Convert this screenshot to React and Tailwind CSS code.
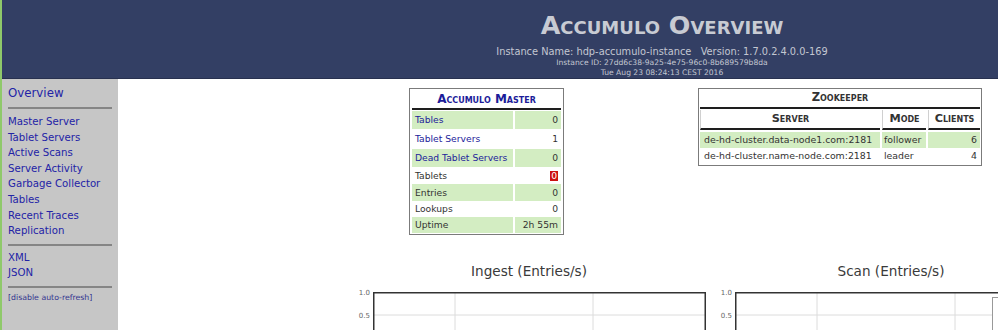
import React from 'react';

const font = "font-['DejaVu_Sans',Verdana,sans-serif]";

const navLinks = [
  'Master Server',
  'Tablet Servers',
  'Active Scans',
  'Server Activity',
  'Garbage Collector',
  'Tables',
  'Recent Traces',
  'Replication',
];

const masterRows = [
  { label: 'Tables', value: '0', link: true, green: true, h: 'h-[18px]' },
  { label: 'Tablet Servers', value: '1', link: true, green: false, h: 'h-[20px]' },
  { label: 'Dead Tablet Servers', value: '0', link: true, green: true, h: 'h-[18px]' },
  { label: 'Tablets', value: '0', link: false, green: false, h: 'h-[17px]', alert: true },
  { label: 'Entries', value: '0', link: false, green: true, h: 'h-[17px]' },
  { label: 'Lookups', value: '0', link: false, green: false, h: 'h-[16px]' },
  { label: 'Uptime', value: '2h 55m', link: false, green: true, h: 'h-[16px]' },
];

const zkRows = [
  { server: 'de-hd-cluster.data-node1.com:2181', mode: 'follower', clients: '6', green: true },
  { server: 'de-hd-cluster.name-node.com:2181', mode: 'leader', clients: '4', green: false },
];

function Chart({ title, legend }) {
  return (
    <div className="w-[354px] flex flex-col">
      <div className="h-[26px] text-center text-[13.6px] text-[#3a3a3a] leading-[26px]">{title}</div>
      <div className="flex mt-[8px]">
        <div className="w-[21px] relative text-[7px] text-[#666]">
          <span className="absolute right-[3px] top-[-4px]">1.0</span>
          <span className="absolute right-[3px] top-[19px]">0.5</span>
        </div>
        <svg width="333" height="60" className="block overflow-visible">
          <line x1="82" y1="0" x2="82" y2="60" stroke="#dcdcdc" strokeWidth="1" />
          <line x1="220" y1="0" x2="220" y2="60" stroke="#dcdcdc" strokeWidth="1" />
          <line x1="0" y1="23" x2="333" y2="23" stroke="#dcdcdc" strokeWidth="1" />
          <line x1="0.75" y1="0" x2="0.75" y2="60" stroke="#333" strokeWidth="1.5" />
          <line x1="0" y1="0.75" x2="333" y2="0.75" stroke="#333" strokeWidth="1.5" />
          {!legend && <line x1="332.25" y1="0" x2="332.25" y2="60" stroke="#333" strokeWidth="1.5" />}
          {legend && <rect x="257.5" y="5.5" width="60" height="40" fill="#fff" stroke="#999" strokeWidth="1" />}
        </svg>
      </div>
    </div>
  );
}

export default function App() {
  return (
    <div className={`${font} w-[998px] h-[330px] overflow-hidden border-l-2 border-[#8fc96a] bg-white flex flex-col`}>
      {/* Header */}
      <div className="h-[79px] shrink-0 bg-[#333f64] border-b border-[#28314f] pl-[324px] flex flex-col items-center text-[#c3c7d2]">
        <div className="mt-[12px] text-[25.4px] leading-[26px] font-bold [font-variant:small-caps] text-[#c8cbd3]">
          Accumulo Overview
        </div>
        <div className="mt-[8px] text-[9.8px] leading-[12px] whitespace-pre">
          {'Instance Name: hdp-accumulo-instance   Version: 1.7.0.2.4.0.0-169'}
        </div>
        <div className="text-[7.6px] leading-[9.5px]">Instance ID: 27dd6c38-9a25-4e75-96c0-8b689579b8da</div>
        <div className="text-[7.6px] leading-[9px]">Tue Aug 23 08:24:13 CEST 2016</div>
      </div>

      <div className="flex flex-1">
        {/* Sidebar */}
        <div className="w-[116px] shrink-0 bg-[#c6c6c6] px-[6px] pt-[6px] text-[#2323a6]">
          <div className="text-[11.8px] leading-[16px]">Overview</div>
          <div className="h-[2px] bg-[#858585] mt-[6px] mb-[5px]" />
          {navLinks.map((l) => (
            <div key={l} className="text-[10.2px] leading-[15.6px]">{l}</div>
          ))}
          <div className="h-[2px] bg-[#858585] mt-[5px] mb-[4px]" />
          <div className="text-[10.2px] leading-[15.6px]">XML</div>
          <div className="text-[10.2px] leading-[15.6px]">JSON</div>
          <div className="h-[2px] bg-[#858585] mt-[5px] mb-[4px]" />
          <div className="text-[7.8px] leading-[12px] text-[#33338f]">[disable auto-refresh]</div>
        </div>

        {/* Main */}
        <div className="flex-1 flex flex-col">
          <div className="flex items-start mt-[9px]">
            {/* Accumulo Master */}
            <div className="ml-[291px] w-[155px] border border-[#7b7b7b] px-[2px] pb-[1px]">
              <div className="h-[21px] border-b-2 border-[#1e1e1e] flex items-center justify-center text-[12px] font-bold [font-variant:small-caps] text-[#1c1c9a]">
                Accumulo Master
              </div>
              <div className="mt-[1px] flex flex-col">
                {masterRows.map((r) => (
                  <div key={r.label} className={`flex gap-[2px] ${r.h} text-[9.2px]`}>
                    <div className={`w-[101px] flex items-center pl-[3px] ${r.green ? 'bg-[#d3edc2]' : 'bg-white'} ${r.link ? 'text-[#22229a]' : 'text-[#333]'}`}>
                      {r.label}
                    </div>
                    <div className={`w-[46px] flex items-center justify-end pr-[3px] text-[#333] ${r.green ? 'bg-[#d3edc2]' : 'bg-white'}`}>
                      {r.alert ? (
                        <span className="bg-[#cc1111] text-white h-[10px] leading-[10px] px-[1px]">{r.value}</span>
                      ) : (
                        r.value
                      )}
                    </div>
                  </div>
                ))}
              </div>
            </div>

            {/* Zookeeper */}
            <div className="ml-[134px] w-[284px] border border-[#7b7b7b] px-[1px] pb-[1px] text-[#333]">
              <div className="h-[20px] border-b-2 border-[#1e1e1e] flex items-center justify-center text-[11.5px] font-bold [font-variant:small-caps] text-[#333]">
                Zookeeper
              </div>
              <div className="flex gap-[2px] mt-[1px] h-[20px] text-[11.3px] font-bold [font-variant:small-caps]">
                <div className="w-[180px] border-l border-[#d0d0d0] border-b-2 border-b-[#1e1e1e] flex items-center justify-center">Server</div>
                <div className="w-[44px] border-l border-[#d0d0d0] border-b-2 border-b-[#1e1e1e] flex items-center justify-center">Mode</div>
                <div className="w-[52px] border-l border-[#d0d0d0] border-b-2 border-b-[#1e1e1e] flex items-center justify-center">Clients</div>
              </div>
              <div className="mt-[2px] flex flex-col">
                {zkRows.map((r) => (
                  <div key={r.server} className="flex gap-[2px] h-[16px] text-[9.4px]">
                    <div className={`w-[180px] flex items-center pl-[4px] ${r.green ? 'bg-[#d3edc2]' : 'bg-white'}`}>{r.server}</div>
                    <div className={`w-[44px] flex items-center pl-[2px] ${r.green ? 'bg-[#d3edc2]' : 'bg-white'}`}>{r.mode}</div>
                    <div className={`w-[52px] flex items-center justify-end pr-[3px] ${r.green ? 'bg-[#d3edc2]' : 'bg-white'}`}>{r.clients}</div>
                  </div>
                ))}
              </div>
            </div>
          </div>

          {/* Charts */}
          <div className="flex gap-[8px] ml-[234px] mt-[23px]">
            <Chart title="Ingest (Entries/s)" />
            <Chart title="Scan (Entries/s)" legend />
          </div>
        </div>
      </div>
    </div>
  );
}
